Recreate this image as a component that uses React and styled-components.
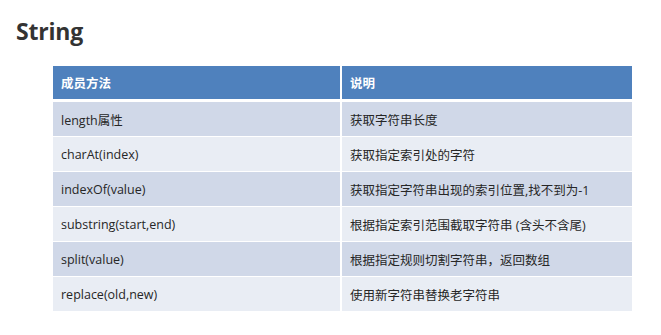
import React from 'react'
import styled, { createGlobalStyle } from 'styled-components'

const GlobalStyle = createGlobalStyle`
body {
  margin: 0;
  background: #ffffff;
  font-family: 'Open Sans', 'Noto Sans CJK SC', sans-serif;
}
`
const Page = styled.div`
width: 661px;
height: 335px;
box-sizing: border-box;
overflow: hidden;
`
const Title = styled.h1`
font-family: 'Open Sans', 'Noto Sans CJK SC', sans-serif;
font-weight: 700;
font-size: 23px;
line-height: 30px;
color: #333333;
margin: 0;
padding: 16px 0 0 16px;
letter-spacing: -0.2px;
`
const Table = styled.div`
display: grid;
grid-template-columns: 287px 290px;
grid-template-rows: 35px repeat(6, 34px);
column-gap: 2px;
row-gap: 1px;
width: 579px;
margin: 20px 0 0 53px;
`
const HeaderCell = styled.div`
background: #4f81bd;
color: #ffffff;
font-weight: 700;
font-size: 12.5px;
display: flex;
align-items: center;
padding-left: 8px;
margin-bottom: 2px;
`
const Cell = styled.div`
background: ${p => (p.$odd ? '#d0d8e8' : '#e9edf4')};
color: #262626;
font-size: 12.5px;
display: flex;
align-items: center;
padding-left: 8px;
white-space: nowrap;
`

const rows = [
  ['length属性', '获取字符串长度'],
  ['charAt(index)', '获取指定索引处的字符'],
  ['indexOf(value)', '获取指定字符串出现的索引位置,找不到为-1'],
  ['substring(start,end)', '根据指定索引范围截取字符串 (含头不含尾)'],
  ['split(value)', '根据指定规则切割字符串，返回数组'],
  ['replace(old,new)', '使用新字符串替换老字符串'],
]

export default function App() {
  return (
    <>
      <GlobalStyle />
      <Page>
        <Title>String</Title>
        <Table>
          <HeaderCell>成员方法</HeaderCell>
          <HeaderCell>说明</HeaderCell>
          {rows.map(([method, desc], i) => (
            <React.Fragment key={method}>
              <Cell $odd={i % 2 === 0}>{method}</Cell>
              <Cell $odd={i % 2 === 0}>{desc}</Cell>
            </React.Fragment>
          ))}
        </Table>
      </Page>
    </>
  )
}
